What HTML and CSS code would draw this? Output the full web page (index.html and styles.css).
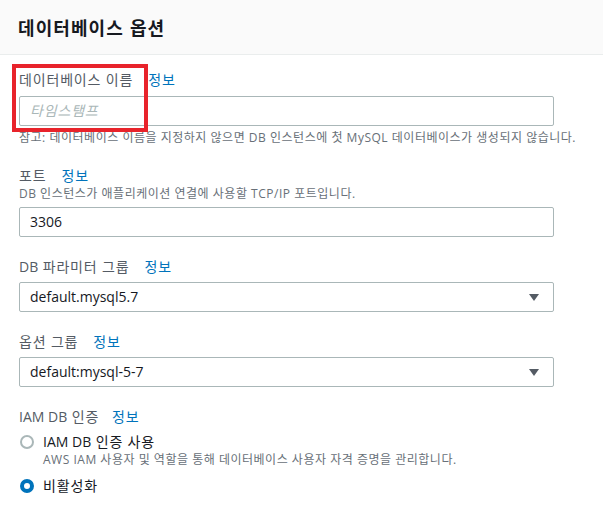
FILE: index.html
```html
<!DOCTYPE html>
<html lang="ko">
<head>
<meta charset="utf-8">
<link rel="stylesheet" href="styles.css">
</head>
<body>
<div class="panel">
  <div class="header"><h2 class="title">데이터베이스 옵션</h2></div>
  <div class="content">
    <div class="field field-first">
      <div class="label-row"><span class="label">데이터베이스 이름</span><a class="info info-first">정보</a></div>
      <div class="input placeholder">타임스탬프</div>
      <div class="note">참고: 데이터베이스 이름을 지정하지 않으면 DB 인스턴스에 첫 MySQL 데이터베이스가 생성되지 않습니다.</div>
      <div class="highlight"></div>
    </div>
    <div class="field">
      <div class="label-row"><span class="label">포트</span><a class="info">정보</a></div>
      <div class="desc">DB 인스턴스가 애플리케이션 연결에 사용할 TCP/IP 포트입니다.</div>
      <div class="input input-desc latin">3306</div>
    </div>
    <div class="field">
      <div class="label-row"><span class="label"><span class="latin">DB</span> 파라미터 그룹</span><a class="info">정보</a></div>
      <div class="input select"><span class="latin">default.mysql5.7</span><span class="caret"></span></div>
    </div>
    <div class="field">
      <div class="label-row"><span class="label">옵션 그룹</span><a class="info">정보</a></div>
      <div class="input select"><span class="latin">default:mysql-5-7</span><span class="caret"></span></div>
    </div>
    <div class="field">
      <div class="label-row"><span class="label"><span class="latin">IAM DB</span> 인증</span><a class="info info-iam">정보</a></div>
      <div class="radio-row">
        <span class="radio"></span>
        <div class="radio-text">
          <div class="radio-label"><span class="latin">IAM DB</span> 인증 사용</div>
          <div class="radio-desc">AWS IAM 사용자 및 역할을 통해 데이터베이스 사용자 자격 증명을 관리합니다.</div>
        </div>
      </div>
      <div class="radio-row radio-row-2">
        <span class="radio radio-on"></span>
        <div class="radio-text">
          <div class="radio-label">비활성화</div>
        </div>
      </div>
    </div>
  </div>
</div>
</body>
</html>
```

FILE: styles.css
```css
* { box-sizing: border-box; }
html, body { margin: 0; padding: 0; background: #ffffff; }
body {
  font-family: "Open Sans", "Noto Sans CJK KR", sans-serif;
  color: #16191f;
  width: 603px;
  height: 512px;
  overflow: hidden;
  letter-spacing: 0.052em;
}
.latin { letter-spacing: 0; }
.header {
  height: 55px;
  background: #fafafa;
  border-bottom: 1px solid #eaeded;
  display: flex;
  align-items: center;
  padding-left: 18px;
}
.title {
  margin: 0 0 1px 0;
  font-size: 18px;
  font-weight: 700;
  line-height: 22px;
  font-family: "Noto Sans CJK KR", sans-serif;
  color: #16191f;
  letter-spacing: 0.06em;
}
.content {
  padding: 15px 49px 0 19px;
}
.field { position: relative; margin-bottom: 20px; }
.label-row {
  display: flex;
  font-size: 14px;
  line-height: 20px;
  height: 20px;
}
.label { color: #545b64; }
.info { color: #0073bb; margin-left: 15px; }
.info-iam { margin-left: 13px; }
.input {
  margin-top: 6px;
  height: 30px;
  border: 1px solid #aab7b8;
  border-radius: 2px;
  padding: 0 10px;
  font-size: 14px;
  line-height: 28px;
  color: #16191f;
  display: flex;
  align-items: center;
}
.input-desc { margin-top: 5px; }
.placeholder { color: #aab7b8; font-style: italic; }
.note, .desc, .radio-desc {
  font-size: 12px;
  line-height: 16px;
  color: #687078;
  white-space: nowrap;
  letter-spacing: 0.043em;
}
.note { margin-top: 4px; }
.desc { margin-top: 0; }
.select { justify-content: space-between; padding-right: 14px; margin-top: 5px; }
.caret {
  width: 0; height: 0;
  border-left: 5px solid transparent;
  border-right: 5px solid transparent;
  border-top: 7px solid #545b64;
}
.highlight {
  position: absolute;
  left: -7px;
  top: -6px;
  width: 136px;
  height: 68px;
  border: 4px solid #e8232b;
}
.radio-row {
  display: flex;
  align-items: flex-start;
  margin-top: 5px;
}
.radio-row-2 { margin-top: 8px; }
.radio {
  width: 14px;
  height: 14px;
  border-radius: 50%;
  border: 2px solid #aab7b8;
  margin: 3px 0 0 1px;
  flex: none;
}
.radio-on { border: 4px solid #0073bb; }
.radio-text { margin-left: 9px; }
.radio-label { font-size: 14px; line-height: 20px; color: #16191f; }
```
